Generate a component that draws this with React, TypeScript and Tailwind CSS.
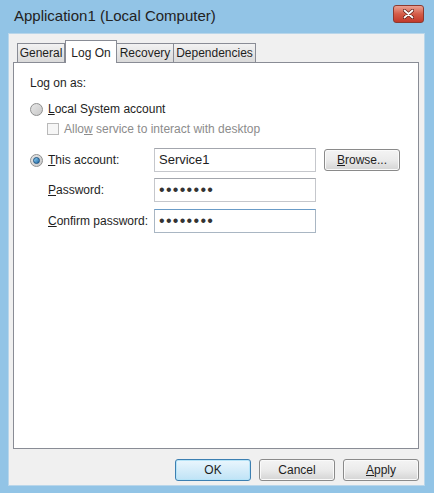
import React from 'react';

const font = "font-['Liberation_Sans','Arial',sans-serif]";

const Radio = ({ checked }: { checked?: boolean }) => (
  <span className="relative flex h-[13px] w-[13px] shrink-0 items-center justify-center rounded-full border border-[#8e8f8f] bg-gradient-to-br from-[#e6e6e6] to-[#c9c9c9]">
    {checked && (
      <span className="h-[7px] w-[7px] rounded-full border border-[#1c5180] bg-gradient-to-br from-[#8fd1f2] to-[#1d6aa6]" />
    )}
  </span>
);

const Field = ({ children, focused }: { children: React.ReactNode; focused?: boolean }) => (
  <div
    className={`flex h-[24px] w-[162px] items-center border bg-white px-[4px] ${
      focused ? 'border-[#a9b6c3] border-t-[#6a9cc8]' : 'border-[#c5c7cc] border-t-[#a3a6ad]'
    }`}
  >
    {children}
  </div>
);

const Dots = () => (
  <span className="text-[16px] leading-none tracking-[1.3px] text-[#333]">••••••••</span>
);

const Button = ({ children, primary }: { children: React.ReactNode; primary?: boolean }) => (
  <div
    className={`flex h-[22px] w-[76px] items-center justify-center rounded-[3px] border text-[12px] text-[#1e1e1e] ${
      primary
        ? 'border-[#3c7fb1] bg-gradient-to-b from-[#eaf6fd] to-[#bfe3f6] shadow-[inset_0_0_0_1px_#b6e4f8]'
        : 'border-[#8a8a8a] bg-gradient-to-b from-[#f4f4f4] via-[#ebebeb] to-[#d4d4d4] shadow-[inset_0_0_0_1px_#fafafa]'
    }`}
  >
    {children}
  </div>
);

const tabs = [
  { label: 'General', w: 'w-[48px]' },
  { label: 'Log On', w: 'w-[52px]', active: true },
  { label: 'Recovery', w: 'w-[58px]' },
  { label: 'Dependencies', w: 'w-[83px]' },
];

export default function App() {
  return (
    <div className={`flex h-[493px] w-[434px] flex-col bg-[#92c4e6] ${font}`}>
      {/* title bar */}
      <div className="flex h-[33px] shrink-0 items-center justify-between pl-[14px] pr-[10px]">
        <span className="text-[15px] text-[#222]">Application1 (Local Computer)</span>
        <div className="mb-[5px] flex h-[18px] w-[31px] items-center justify-center rounded-[3px] border border-[#8b3a30] bg-gradient-to-b from-[#e9a193] via-[#d45c48] to-[#c2382a]">
          <svg width="11" height="10" viewBox="0 0 11 10">
            <path d="M1.5 1.5 L9.5 8.5 M9.5 1.5 L1.5 8.5" stroke="#5a1a12" strokeWidth="3.2" strokeLinecap="round" />
            <path d="M1.5 1.5 L9.5 8.5 M9.5 1.5 L1.5 8.5" stroke="#ffffff" strokeWidth="1.8" strokeLinecap="round" />
          </svg>
        </div>
      </div>

      {/* client area */}
      <div className="ml-[8px] mr-[9px] mb-[7px] flex flex-1 flex-col border border-[#b9d6ea] bg-[#f0f0f0] pl-[4px] pr-[5px] pt-[6px]">
        {/* tabs */}
        <div className="flex h-[22px] items-end pl-[4px] text-[12px] text-[#1e1e1e]">
          {tabs.map((t) =>
            t.active ? (
              <div
                key={t.label}
                className={`relative z-10 -mb-px flex h-[23px] ${t.w} items-start justify-center border border-b-0 border-[#898c95] bg-white pt-[3px]`}
              >
                {t.label}
              </div>
            ) : (
              <div
                key={t.label}
                className={`flex h-[19px] ${t.w} -ml-px first:ml-0 items-center justify-center border border-b-0 border-[#898c95] bg-gradient-to-b from-[#f2f2f2] to-[#dadada]`}
              >
                {t.label}
              </div>
            )
          )}
        </div>

        {/* tab panel */}
        <div className="flex h-[387px] flex-col border border-[#898c95] bg-white pl-[16px] pt-[13px] text-[12px] text-[#1e1e1e]">
          <div className="h-[15px] leading-[15px]">Log on as:</div>

          <div className="mt-[10px] flex h-[16px] items-center gap-[5px]">
            <Radio />
            <span>
              <span className="underline">L</span>ocal System account
            </span>
          </div>

          <div className="ml-[17px] mt-[5px] flex h-[14px] items-center gap-[5px]">
            <span className="h-[12px] w-[12px] border border-[#b9b9b9] bg-[#f6f6f6]" />
            <span className="text-[#8c8c8c]">
              Allo<span className="underline">w</span> service to interact with desktop
            </span>
          </div>

          <div className="mt-[12px] flex h-[24px] items-center">
            <div className="flex w-[124px] items-center gap-[5px]">
              <Radio checked />
              <span>
                <span className="underline">T</span>his account:
              </span>
            </div>
            <Field>
              <span className="text-[13px]">Service1</span>
            </Field>
            <div className="ml-[8px]">
              <Button>
                <span>
                  <span className="underline">B</span>rowse...
                </span>
              </Button>
            </div>
          </div>

          <div className="mt-[6px] flex h-[24px] items-center">
            <div className="w-[124px] pl-[18px]">
              <span className="underline">P</span>assword:
            </div>
            <Field>
              <Dots />
            </Field>
          </div>

          <div className="mt-[7px] flex h-[24px] items-center">
            <div className="w-[124px] pl-[18px]">
              <span className="underline">C</span>onfirm password:
            </div>
            <Field focused>
              <Dots />
            </Field>
          </div>
        </div>

        {/* buttons */}
        <div className="mt-[10px] flex justify-end gap-[8px]">
          <Button primary>OK</Button>
          <Button>Cancel</Button>
          <Button>
            <span>
              <span className="underline">A</span>pply
            </span>
          </Button>
        </div>
      </div>
    </div>
  );
}
